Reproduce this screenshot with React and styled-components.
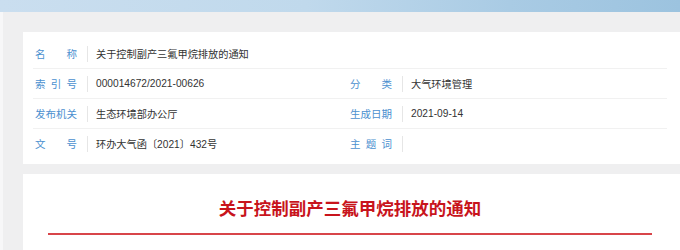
import React from 'react';
import styled, { createGlobalStyle } from 'styled-components';

const GlobalStyle = createGlobalStyle`
  html, body {
    margin: 0;
    padding: 0;
    background: #efeff0;
    font-family: "Liberation Sans", "Noto Sans CJK SC", sans-serif;
  }
`

const TopBar = styled.div`
  height: 12px;
  background: linear-gradient(90deg, #cadeef 0%, #c0d9ec 45%, #a9cbe4 75%, #9cc3df 100%);
`

const Page = styled.div`
  display: flex;
  flex-direction: column;
  gap: 10px;
  padding: 20px 0 0 20px;
  border-left: 3px solid #f7f7f8;
  box-sizing: border-box;
`

const InfoCard = styled.div`
  background: #fff;
  padding: 7px 13px 6px 10px;
`

const Row = styled.div`
  display: grid;
  grid-template-columns: 315px 1fr;
  height: 29px;
  border-bottom: ${props => props.last ? 'none' : '1px solid #f1f1f1'};
`

const Field = styled.div`
  display: flex;
  align-items: center;
  padding-left: 2px;
  grid-column: ${props => props.wide ? '1 / 3' : 'auto'};
`

const Label = styled.div`
  display: flex;
  justify-content: space-between;
  width: 42px;
  font-size: 10.5px;
  color: #4b90cf;
  white-space: nowrap;
`

const Divider = styled.span`
  width: 1px;
  height: 16px;
  background: #e6e6e6;
  margin: 0 8px 0 10px;
`

const Value = styled.div`
  font-size: 10.2px;
  color: #333;
  white-space: nowrap;
`

const TitleCard = styled.div`
  background: #fff;
  padding: 22px 28px 20px 25px;
  min-height: 80px;
`

const Title = styled.h1`
  margin: 0;
  text-align: center;
  font-size: 17.5px;
  line-height: 24px;
  font-weight: bold;
  color: #c8141c;
  font-family: "Noto Sans CJK SC", sans-serif;
`

const RedRule = styled.div`
  margin-top: 13px;
  height: 2px;
  background: #d8454a;
`

const Item = ({ label, value, wide }) => (
  <Field wide={wide}>
    <Label>{label.split('').map((c, i) => <span key={i}>{c}</span>)}</Label>
    <Divider />
    <Value>{value}</Value>
  </Field>
)

const title = '关于控制副产三氟甲烷排放的通知'

export default function App() {
  return (
    <>
      <GlobalStyle />
      <TopBar />
      <Page>
        <InfoCard>
          <Row>
            <Item wide label="名称" value={title} />
          </Row>
          <Row>
            <Item label="索引号" value="000014672/2021-00626" />
            <Item label="分类" value="大气环境管理" />
          </Row>
          <Row>
            <Item label="发布机关" value="生态环境部办公厅" />
            <Item label="生成日期" value="2021-09-14" />
          </Row>
          <Row last>
            <Item label="文号" value="环办大气函〔2021〕432号" />
            <Item label="主题词" value="" />
          </Row>
        </InfoCard>
        <TitleCard>
          <Title>{title}</Title>
          <RedRule />
        </TitleCard>
      </Page>
    </>
  );
}
